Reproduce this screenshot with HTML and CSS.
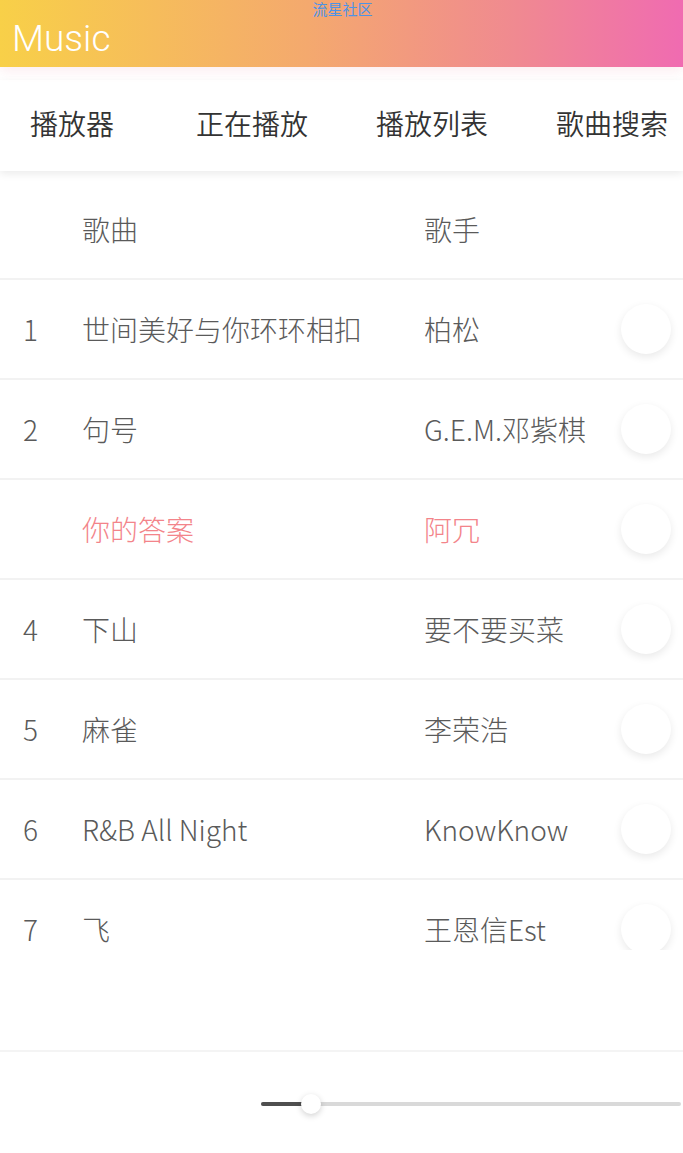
FILE: index.html
```html
<!DOCTYPE html>
<html lang="zh">
<head>
<meta charset="utf-8">
<title>Music</title>
<link rel="stylesheet" href="styles.css">
</head>
<body>
<div class="app">
  <header class="header">
    <span class="watermark">流星社区</span>
    <h1 class="title">Music</h1>
  </header>

  <nav class="tabs-wrap">
    <div class="tabs">
      <span class="tab">播放器</span>
      <span class="tab">正在播放</span>
      <span class="tab">播放列表</span>
      <span class="tab">歌曲搜索</span>
    </div>
  </nav>

  <section class="list">
    <div class="row head">
      <span class="num"></span>
      <span class="song">歌曲</span>
      <span class="artist">歌手</span>
      <span class="act"></span>
    </div>
    <div class="row">
      <span class="num">1</span>
      <span class="song">世间美好与你环环相扣</span>
      <span class="artist">柏松</span>
      <span class="act"><i class="dot"></i></span>
    </div>
    <div class="row">
      <span class="num">2</span>
      <span class="song">句号</span>
      <span class="artist">G.E.M.邓紫棋</span>
      <span class="act"><i class="dot"></i></span>
    </div>
    <div class="row active">
      <span class="num"></span>
      <span class="song">你的答案</span>
      <span class="artist">阿冗</span>
      <span class="act"><i class="dot"></i></span>
    </div>
    <div class="row">
      <span class="num">4</span>
      <span class="song">下山</span>
      <span class="artist">要不要买菜</span>
      <span class="act"><i class="dot"></i></span>
    </div>
    <div class="row">
      <span class="num">5</span>
      <span class="song">麻雀</span>
      <span class="artist">李荣浩</span>
      <span class="act"><i class="dot"></i></span>
    </div>
    <div class="row">
      <span class="num">6</span>
      <span class="song">R&amp;B All Night</span>
      <span class="artist">KnowKnow</span>
      <span class="act"><i class="dot"></i></span>
    </div>
    <div class="row">
      <span class="num">7</span>
      <span class="song">飞</span>
      <span class="artist">王恩信Est</span>
      <span class="act"><i class="dot"></i></span>
    </div>
  </section>

  <footer class="footer">
    <div class="slider">
      <div class="fill" style="width: 50px"></div>
      <div class="thumb"></div>
    </div>
  </footer>
</div>
</body>
</html>
```

FILE: styles.css
```css
* { box-sizing: border-box; }

html, body {
  margin: 0;
  padding: 0;
  background: #ffffff;
}

body {
  font-family: "Noto Sans CJK SC", "Noto Sans", sans-serif;
  color: #555555;
  width: 683px;
  height: 1153px;
  overflow: hidden;
}

.app {
  display: flex;
  flex-direction: column;
  height: 1153px;
}

.header {
  position: relative;
  height: 67px;
  flex: none;
  background: linear-gradient(to right, #f8d048 0%, #f4a96e 45%, #f08a90 75%, #f06bb1 100%);
  box-shadow: 0 5px 10px rgba(240, 120, 150, 0.12);
  z-index: 2;
  display: flex;
  align-items: flex-end;
}

.watermark {
  position: absolute;
  top: 1px;
  left: 0;
  right: 0;
  text-align: center;
  font-family: "Noto Sans CJK SC", sans-serif;
  font-size: 15px;
  line-height: 15px;
  color: #4d93e6;
  padding-left: 2px;
}

.title {
  margin: 0 0 6px 12px;
  font-family: Roboto, sans-serif;
  font-weight: 300;
  font-size: 37px;
  line-height: 44px;
  color: #ffffff;
}

.tabs-wrap {
  margin-top: 13px;
  height: 91px;
  flex: none;
  background: #ffffff;
  box-shadow: 0 3px 8px rgba(0, 0, 0, 0.08);
  overflow: hidden;
  position: relative;
  z-index: 1;
}

.tabs {
  display: grid;
  grid-template-columns: repeat(4, 180px);
  margin-left: -18px;
  height: 100%;
  align-items: center;
}

.tab {
  justify-self: center;
  font-size: 28px;
  line-height: 32px;
  font-weight: 350;
  color: #333333;
  padding-bottom: 5px;
}

.list {
  margin-top: 9px;
  height: 770px;
  flex: none;
  overflow: hidden;
}

.row {
  display: flex;
  align-items: center;
  height: 100px;
  border-bottom: 2px solid #f2f2f2;
  font-size: 28px;
  line-height: 36px;
  font-weight: 300;
  color: #5a5a5a;
}

.num {
  width: 82px;
  padding-left: 23px;
  flex: none;
}

.song {
  width: 342px;
  flex: none;
  white-space: nowrap;
}

.artist {
  flex: 1;
  white-space: nowrap;
}

.act {
  width: 62px;
  flex: none;
  display: flex;
}

.dot {
  display: block;
  width: 50px;
  height: 50px;
  border-radius: 50%;
  background: #ffffff;
  box-shadow: 0 3px 8px rgba(0, 0, 0, 0.09);
}

.row.active {
  color: #f3848a;
}

.footer {
  margin-top: 100px;
  flex: 1;
  border-top: 2px solid #f4f4f4;
  display: flex;
  align-items: center;
  padding: 0 2px 0 261px;
}

.slider {
  position: relative;
  flex: 1;
  height: 4px;
  border-radius: 2px;
  background: #d9d9d9;
  margin-top: 2px;
}

.fill {
  height: 4px;
  border-radius: 2px;
  background: #4f4f4f;
}

.thumb {
  position: absolute;
  left: 40px;
  top: -8px;
  width: 20px;
  height: 20px;
  border-radius: 50%;
  background: #ffffff;
  box-shadow: 0 2px 6px rgba(0, 0, 0, 0.18);
}
```
